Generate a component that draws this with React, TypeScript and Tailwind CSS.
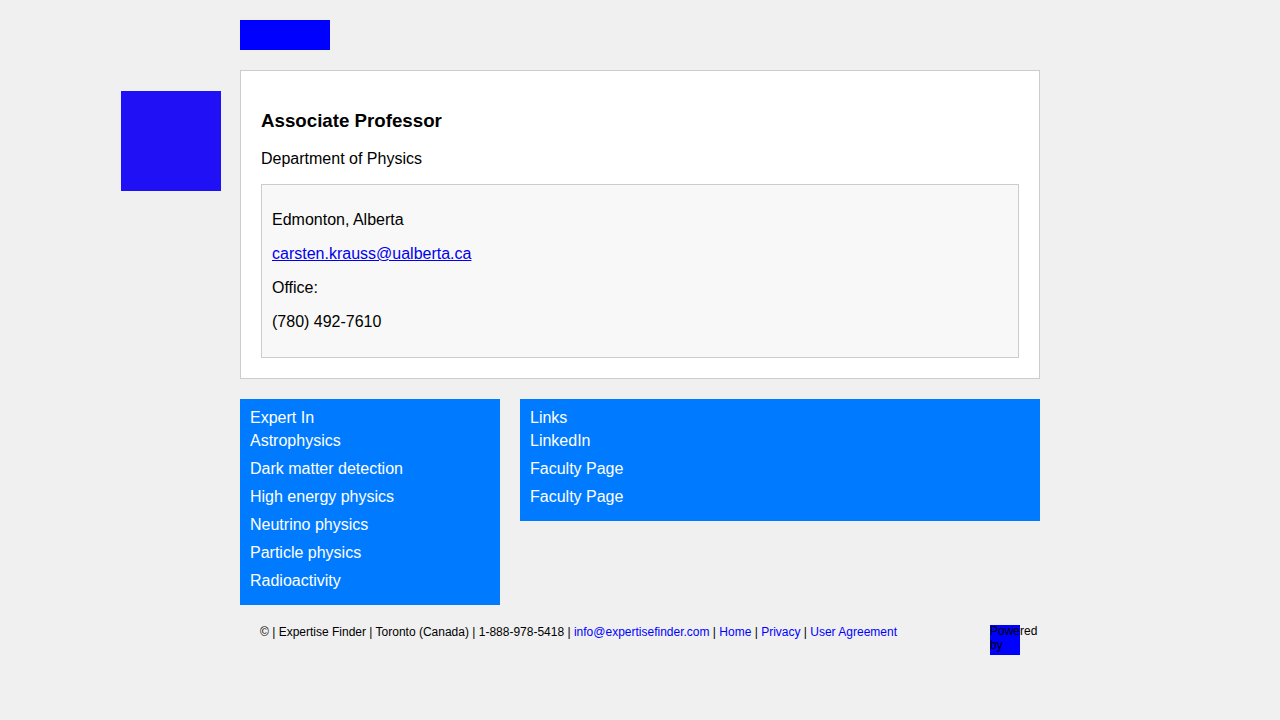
import React from "react";

const expert = [
  "Astrophysics",
  "Dark matter detection",
  "High energy physics",
  "Neutrino physics",
  "Particle physics",
  "Radioactivity",
];
const links = ["LinkedIn", "Faculty Page", "Faculty Page"];

function Box({ title, items, className }: { title: string; items: string[]; className: string }) {
  return (
    <div className={`bg-[#007bff] text-white px-[10px] pt-[10px] pb-[5px] text-[16px] ${className}`}>
      <div className="leading-[18px]">{title}</div>
      <ul className="mt-[5px]">
        {items.map((t, i) => (
          <li key={i} className="leading-[18px] pb-[10px]">
            {t}
          </li>
        ))}
      </ul>
    </div>
  );
}

export default function App() {
  return (
    <div
      className="min-h-[720px] bg-[#f0f0f0] text-black"
      style={{ fontFamily: '"Liberation Sans", Arial, sans-serif' }}
    >
      <div className="flex pl-[121px] pt-[20px]">
        <div className="w-[100px] shrink-0 pt-[71px]">
          <div className="w-[100px] h-[100px] bg-[#1f10f5]" />
        </div>
        <div className="ml-[19px] w-[800px] shrink-0">
          <div className="w-[90px] h-[30px] bg-[#0000ff]" />
          <div className="mt-[20px] bg-white border border-[#cccccc] p-[20px]">
            <h3 className="text-[18.72px] font-bold leading-[21px] my-[19px]">Associate Professor</h3>
            <p className="text-[16px] leading-[18px] mb-[16px]">Department of Physics</p>
            <div className="bg-[#f8f8f8] border border-[#cccccc] p-[10px] text-[16px] leading-[18px]">
              <p className="my-[16px]">Edmonton, Alberta</p>
              <p className="my-[16px]">
                <a href="#" className="text-[#0000ee] underline">
                  carsten.krauss@ualberta.ca
                </a>
              </p>
              <p className="my-[16px]">Office:</p>
              <p className="my-[16px]">(780) 492-7610</p>
            </div>
          </div>
          <div className="mt-[20px] flex items-start gap-[20px]">
            <Box title="Expert In" items={expert} className="w-[260px]" />
            <Box title="Links" items={links} className="flex-1" />
          </div>
          <div className="mt-[20px] flex justify-between items-start px-[20px]">
            <div className="text-[12px] leading-[14px]">
              © | Expertise Finder | Toronto (Canada) | 1-888-978-5418 |{" "}
              <a href="#" className="text-[#0000ff]">info@expertisefinder.com</a> |{" "}
              <a href="#" className="text-[#0000ff]">Home</a> |{" "}
              <a href="#" className="text-[#0000ff]">Privacy</a> |{" "}
              <a href="#" className="text-[#0000ff]">User Agreement</a>
            </div>
            <div className="w-[30px] h-[30px] bg-[#0000ff] text-[12px] leading-[13.8px] text-black">
              Powered by
            </div>
          </div>
        </div>
      </div>
    </div>
  );
}
